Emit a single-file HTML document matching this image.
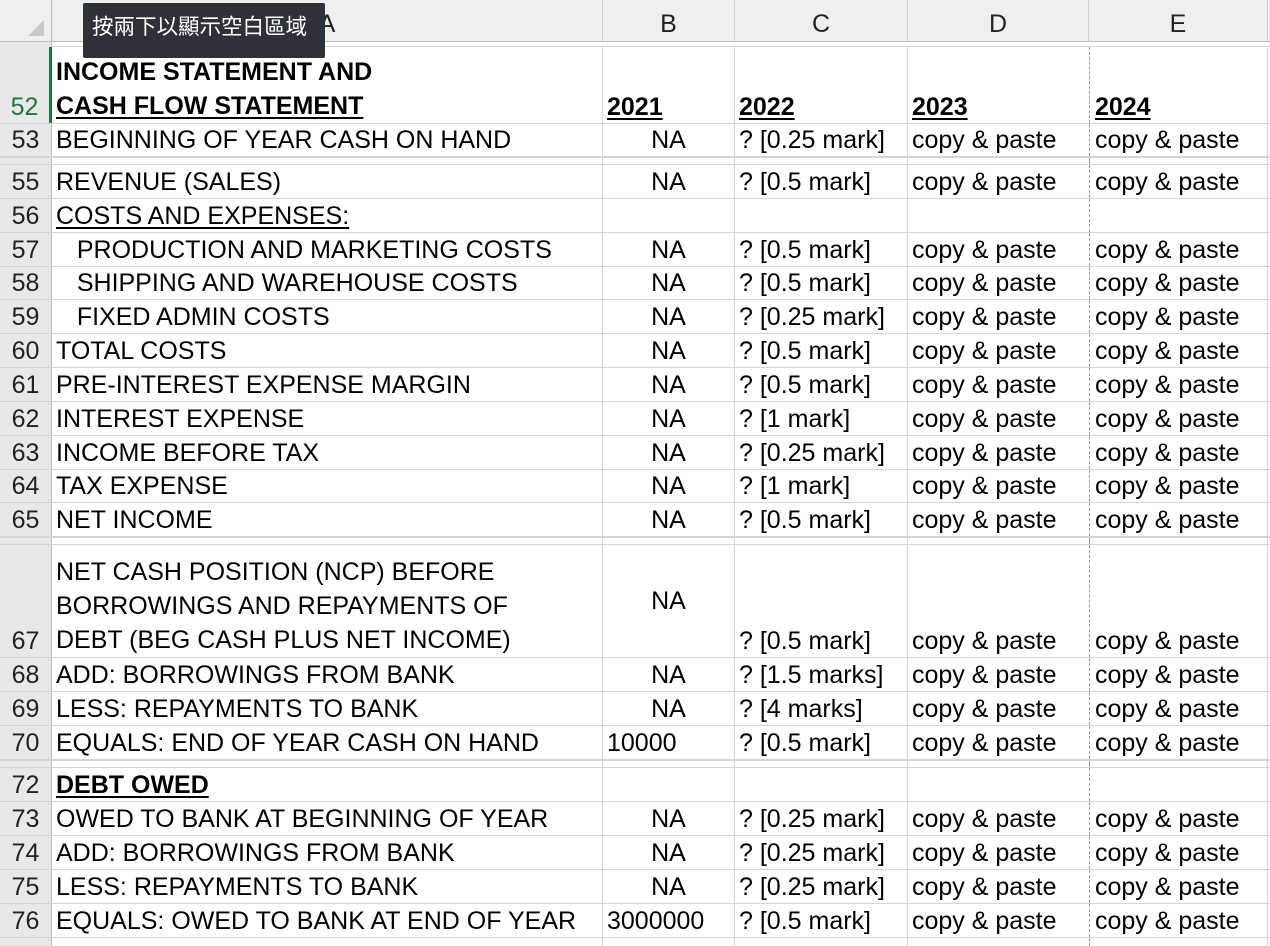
<!DOCTYPE html>
<html><head><meta charset="utf-8"><style>
*{margin:0;padding:0;box-sizing:border-box}
html,body{width:1270px;height:946px;overflow:hidden}
body{background:#fff;position:relative;font-family:"Liberation Sans",Arial,sans-serif;font-size:25px;color:#000}
.hdr{position:absolute;left:0;top:0;width:1270px;height:42px;background:#efefef;border-bottom:1px solid #bdbdbd}
.hc{position:absolute;top:0;height:42px;line-height:48px;text-align:center;color:#222;font-size:25px;border-right:1px solid #d0d0d0}
.rh{position:absolute;left:0;width:52px;top:42px;height:904px;background:#e8e8e8;border-right:1px solid #bdbdbd}
.r{position:absolute;left:0;width:1270px;border-bottom:1px solid #d4d4d4}
.r div{position:absolute;top:0;bottom:0;display:flex;align-items:flex-end;padding-bottom:0;line-height:31px;white-space:nowrap}
.n{left:0;width:52px;justify-content:center;color:#222;background:#e8e8e8;border-right:1px solid #bdbdbd}
.a{left:52px;width:551px;padding-left:4px;border-right:1px solid #d4d4d4}
.b{left:603px;width:132px;justify-content:center;border-right:1px solid #d4d4d4}
.bl{justify-content:flex-start;padding-left:4px}
.c{left:735px;width:173px;padding-left:4px;border-right:1px solid #d4d4d4}
.d{left:908px;width:181px;padding-left:4px}
.e{left:1089px;width:179px;padding-left:5px;border-left:1px dashed #999;border-right:1px solid #d4d4d4}
.g{position:absolute;left:0;width:1270px;border-bottom:1px solid #d4d4d4;background:#fff}
u{text-underline-offset:3px}
.tip{position:absolute;left:83px;top:3px;width:242px;height:55px;background:#2e3238;color:#fff;font-family:"Liberation Sans","Noto Sans CJK TC",sans-serif;font-size:21.5px;line-height:48px;padding-left:9px;border-radius:2px}
</style></head><body>
<div class="hdr">
<div class="hc" style="left:0;width:52px;border-right:1px solid #bdbdbd"><span style="position:absolute;left:28px;top:20px;width:0;height:0;border-left:16px solid transparent;border-bottom:16px solid #c8c8c8"></span></div>
<div class="hc" style="left:52px;width:551px">A</div>
<div class="hc" style="left:603px;width:132px">B</div>
<div class="hc" style="left:735px;width:173px">C</div>
<div class="hc" style="left:908px;width:181px">D</div>
<div class="hc" style="left:1089px;width:179px">E</div>
</div>
<div class="g" style="top:42px;height:5px;border-bottom:1px solid #d4d4d4"></div>
<div class="rh"></div>

<div class="r" style="top:47px;height:77px"><div class="n" style="color:#217346;border-right:3px solid #217346">52</div><div class="a" style="flex-direction:column;align-items:flex-start;justify-content:flex-end;font-weight:bold;line-height:34px"><span>INCOME STATEMENT AND</span><u>CASH FLOW STATEMENT</u></div><div class="b bl"><b><u>2021</u></b></div><div class="c"><b><u>2022</u></b></div><div class="d"><b><u>2023</u></b></div><div class="e"><b><u>2024</u></b></div></div>
<div class="r" style="top:124px;height:33px"><div class="n">53</div><div class="a">BEGINNING OF YEAR CASH ON HAND</div><div class="b">NA</div><div class="c">? [0.25 mark]</div><div class="d">copy &amp; paste</div><div class="e">copy &amp; paste</div></div>
<div class="r" style="top:157px;height:8px;border-top:1px solid #d4d4d4"><div class="n"></div><div class="a"></div><div class="b"></div><div class="c"></div><div class="d"></div><div class="e"></div></div>
<div class="r" style="top:165px;height:34px"><div class="n">55</div><div class="a">REVENUE (SALES)</div><div class="b">NA</div><div class="c">? [0.5 mark]</div><div class="d">copy &amp; paste</div><div class="e">copy &amp; paste</div></div>
<div class="r" style="top:199px;height:34px"><div class="n">56</div><div class="a"><u>COSTS AND EXPENSES:</u></div><div class="b"></div><div class="c"></div><div class="d"></div><div class="e"></div></div>
<div class="r" style="top:233px;height:34px"><div class="n">57</div><div class="a">&nbsp;&nbsp;&nbsp;PRODUCTION AND MARKETING COSTS</div><div class="b">NA</div><div class="c">? [0.5 mark]</div><div class="d">copy &amp; paste</div><div class="e">copy &amp; paste</div></div>
<div class="r" style="top:267px;height:33px"><div class="n">58</div><div class="a">&nbsp;&nbsp;&nbsp;SHIPPING AND WAREHOUSE COSTS</div><div class="b">NA</div><div class="c">? [0.5 mark]</div><div class="d">copy &amp; paste</div><div class="e">copy &amp; paste</div></div>
<div class="r" style="top:300px;height:34px"><div class="n">59</div><div class="a">&nbsp;&nbsp;&nbsp;FIXED ADMIN COSTS</div><div class="b">NA</div><div class="c">? [0.25 mark]</div><div class="d">copy &amp; paste</div><div class="e">copy &amp; paste</div></div>
<div class="r" style="top:334px;height:34px"><div class="n">60</div><div class="a">TOTAL COSTS</div><div class="b">NA</div><div class="c">? [0.5 mark]</div><div class="d">copy &amp; paste</div><div class="e">copy &amp; paste</div></div>
<div class="r" style="top:368px;height:34px"><div class="n">61</div><div class="a">PRE-INTEREST EXPENSE MARGIN</div><div class="b">NA</div><div class="c">? [0.5 mark]</div><div class="d">copy &amp; paste</div><div class="e">copy &amp; paste</div></div>
<div class="r" style="top:402px;height:34px"><div class="n">62</div><div class="a">INTEREST EXPENSE</div><div class="b">NA</div><div class="c">? [1 mark]</div><div class="d">copy &amp; paste</div><div class="e">copy &amp; paste</div></div>
<div class="r" style="top:436px;height:34px"><div class="n">63</div><div class="a">INCOME BEFORE TAX</div><div class="b">NA</div><div class="c">? [0.25 mark]</div><div class="d">copy &amp; paste</div><div class="e">copy &amp; paste</div></div>
<div class="r" style="top:470px;height:33px"><div class="n">64</div><div class="a">TAX EXPENSE</div><div class="b">NA</div><div class="c">? [1 mark]</div><div class="d">copy &amp; paste</div><div class="e">copy &amp; paste</div></div>
<div class="r" style="top:503px;height:34px"><div class="n">65</div><div class="a">NET INCOME</div><div class="b">NA</div><div class="c">? [0.5 mark]</div><div class="d">copy &amp; paste</div><div class="e">copy &amp; paste</div></div>
<div class="r" style="top:537px;height:8px;border-top:1px solid #d4d4d4"><div class="n"></div><div class="a"></div><div class="b"></div><div class="c"></div><div class="d"></div><div class="e"></div></div>
<div class="r" style="top:545px;height:113px"><div class="n">67</div><div class="a" style="flex-direction:column;align-items:flex-start;justify-content:flex-end;line-height:34px"><span>NET CASH POSITION (NCP) BEFORE</span><span>BORROWINGS AND REPAYMENTS OF</span><span>DEBT (BEG CASH PLUS NET INCOME)</span></div><div class="b" style="align-items:center">NA</div><div class="c">? [0.5 mark]</div><div class="d">copy &amp; paste</div><div class="e">copy &amp; paste</div></div>
<div class="r" style="top:658px;height:34px"><div class="n">68</div><div class="a">ADD: BORROWINGS FROM BANK</div><div class="b">NA</div><div class="c">? [1.5 marks]</div><div class="d">copy &amp; paste</div><div class="e">copy &amp; paste</div></div>
<div class="r" style="top:692px;height:34px"><div class="n">69</div><div class="a">LESS: REPAYMENTS TO BANK</div><div class="b">NA</div><div class="c">? [4 marks]</div><div class="d">copy &amp; paste</div><div class="e">copy &amp; paste</div></div>
<div class="r" style="top:726px;height:34px"><div class="n">70</div><div class="a">EQUALS: END OF YEAR CASH ON HAND</div><div class="b bl">10000</div><div class="c">? [0.5 mark]</div><div class="d">copy &amp; paste</div><div class="e">copy &amp; paste</div></div>
<div class="r" style="top:760px;height:8px;border-top:1px solid #d4d4d4"><div class="n"></div><div class="a"></div><div class="b"></div><div class="c"></div><div class="d"></div><div class="e"></div></div>
<div class="r" style="top:768px;height:34px"><div class="n">72</div><div class="a"><b><u>DEBT OWED</u></b></div><div class="b"></div><div class="c"></div><div class="d"></div><div class="e"></div></div>
<div class="r" style="top:802px;height:34px"><div class="n">73</div><div class="a">OWED TO BANK AT BEGINNING OF YEAR</div><div class="b">NA</div><div class="c">? [0.25 mark]</div><div class="d">copy &amp; paste</div><div class="e">copy &amp; paste</div></div>
<div class="r" style="top:836px;height:34px"><div class="n">74</div><div class="a">ADD: BORROWINGS FROM BANK</div><div class="b">NA</div><div class="c">? [0.25 mark]</div><div class="d">copy &amp; paste</div><div class="e">copy &amp; paste</div></div>
<div class="r" style="top:870px;height:34px"><div class="n">75</div><div class="a">LESS: REPAYMENTS TO BANK</div><div class="b">NA</div><div class="c">? [0.25 mark]</div><div class="d">copy &amp; paste</div><div class="e">copy &amp; paste</div></div>
<div class="r" style="top:904px;height:34px"><div class="n">76</div><div class="a">EQUALS: OWED TO BANK AT END OF YEAR</div><div class="b bl">3000000</div><div class="c">? [0.5 mark]</div><div class="d">copy &amp; paste</div><div class="e">copy &amp; paste</div></div>
<div class="r" style="top:938px;height:8px;border-bottom:none"><div class="n"></div><div class="a"></div><div class="b"></div><div class="c"></div><div class="d"></div><div class="e"></div></div>

<div class="tip">按兩下以顯示空白區域</div>
</body></html>
